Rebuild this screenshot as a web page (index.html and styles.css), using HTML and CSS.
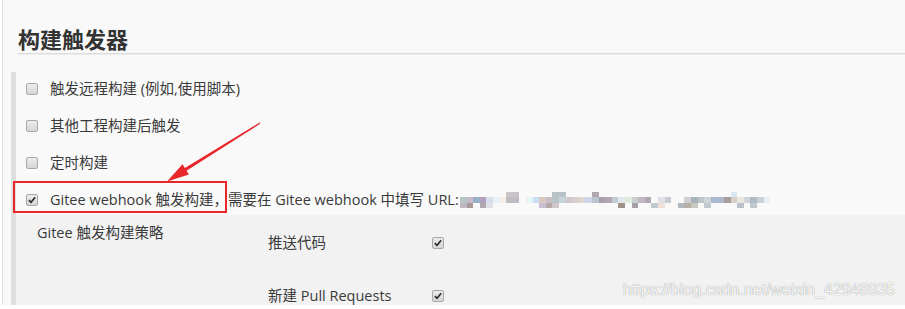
FILE: index.html
```html
<!DOCTYPE html>
<html lang="zh-CN">
<head>
<meta charset="utf-8">
<title>构建触发器</title>
<link rel="stylesheet" href="styles.css">
</head>
<body>
<div class="page">
  <h2 class="title">构建触发器</h2>
  <div class="section">
    <div class="row"><span class="cb"></span><span class="lbl">触发远程构建 (例如,使用脚本)</span></div>
    <div class="row"><span class="cb"></span><span class="lbl">其他工程构建后触发</span></div>
    <div class="row"><span class="cb"></span><span class="lbl">定时构建</span></div>
    <div class="row"><span class="cb checked"><svg viewBox="0 0 12 12" width="10" height="10"><path d="M2.2 6.2 L4.8 8.8 L9.8 2.6" fill="none" stroke="#2b2b2b" stroke-width="2"/></svg></span><span class="lbl">Gitee webhook 触发构建，需要在 Gitee webhook 中填写 URL:<span class="blur"></span></span></div>
    <div class="sub">
      <div class="sub-label">Gitee 触发构建策略</div>
      <div class="opts">
        <div class="opt"><span class="opt-name">推送代码</span><span class="cb checked"><svg viewBox="0 0 12 12" width="10" height="10"><path d="M2.2 6.2 L4.8 8.8 L9.8 2.6" fill="none" stroke="#2b2b2b" stroke-width="2"/></svg></span></div>
        <div class="opt"><span class="opt-name">新建 Pull Requests</span><span class="cb checked"><svg viewBox="0 0 12 12" width="10" height="10"><path d="M2.2 6.2 L4.8 8.8 L9.8 2.6" fill="none" stroke="#2b2b2b" stroke-width="2"/></svg></span></div>
      </div>
    </div>
  </div>
</div>
<div class="annot-box"></div>
<svg class="arrow" width="905" height="309" viewBox="0 0 905 309">
  <polygon points="259.7,122.4 184.9,168.1 182.5,164.3 167,181.5 188.9,174.5 186.5,170.7 260.4,123.6" fill="#e8262c"/>
</svg>
<div class="watermark">https://blog.csdn.net/weixin_42948935</div>
</body>
</html>
```
FILE: styles.css
```css
html, body {
  margin: 0;
  padding: 0;
  background: #ffffff;
}
body {
  position: relative;
  width: 905px;
  height: 309px;
  overflow: hidden;
  font-family: "Open Sans", "Noto Sans CJK SC", sans-serif;
  color: #3a3a3a;
}
.page {
  margin-left: 2px;
  border-left: 1px solid #e2e2e2;
  background: #f9f9f9;
  height: 305px;
  overflow: hidden;
  box-sizing: border-box;
}
.title {
  margin: 0 0 0 15px;
  padding-top: 23px;
  font-family: "Noto Sans CJK SC", sans-serif;
  font-size: 22px;
  font-weight: bold;
  line-height: 30px;
  color: #333333;
  border-bottom: 1px solid #dcdcdc;
  box-shadow: 0 1px 0 #ececec;
}
.section {
  margin-top: 18px;
  margin-left: 8px;
  border-left: 5px solid #dedede;
  padding-top: 5px;
  height: 300px;
}
.row {
  display: flex;
  align-items: center;
  height: 24px;
  padding-left: 10px;
  gap: 12px;
  margin-bottom: 13px;
  font-size: 14.5px;
}
.row:nth-child(4) {
  margin-bottom: 3px;
}
.lbl {
  white-space: nowrap;
  line-height: 20px;
}
.cb {
  display: inline-flex;
  align-items: center;
  justify-content: center;
  box-sizing: border-box;
  width: 12px;
  height: 12px;
  border: 1px solid #a8a8a8;
  border-radius: 2px;
  background: linear-gradient(#ececec, #d6d6d6);
  flex: none;
}
.blur {
  display: inline-block;
  vertical-align: middle;
  width: 312px;
  height: 16px;
  margin-left: 1px;
  margin-top: -3px;
  filter: blur(0.4px);
  background-repeat: no-repeat;
  background-size: 312px 5px, 312px 6px, 312px 5px;
  background-position: 0 0, 0 5px, 0 11px;
  background-image:
    linear-gradient(to right, transparent 0 46.2px, #c8c4c8 46.2px 59.4px, transparent 59.4px 92.4px, #b8c0c8 92.4px 105.6px, transparent 105.6px 132px, #b0a8b0 132px 138.6px, transparent 138.6px 270.6px, #d8e8f0 270.6px 277.2px, transparent 277.2px),
    linear-gradient(to right,
      #b8c4c4 0 6.6px, #c8b8c8 6.6px 13.2px, #98b0c8 13.2px 19.8px, #b0a0c0 19.8px 26.4px,
      #d8e0ec 26.4px 33px, #e8eef4 33px 39.6px, #f4f0e8 39.6px 46.2px, #c0bcc4 46.2px 59.4px,
      transparent 59.4px 66px, #e8f4f8 66px 72.6px, #c8dcf0 72.6px 79.2px, #d8c8c0 79.2px 85.8px,
      #c8c0c4 85.8px 92.4px, #b8c4c8 92.4px 99px, #c8d4d8 99px 105.6px, #d0c8c8 105.6px 112.2px,
      #d8d0d0 112.2px 118.8px, #e0d4d0 118.8px 125.4px, #c8d8e8 125.4px 132px, #b8c4d0 132px 138.6px,
      #a8a0a8 138.6px 145.2px, #b0a8b0 145.2px 151.8px, #c0ccd8 151.8px 158.4px, #e0e8e8 158.4px 165px,
      #e0ece0 165px 171.6px, #c8d0d0 171.6px 178.2px, #c0b8c0 178.2px 184.8px, #b0a8b0 184.8px 191.4px,
      transparent 191.4px 198px, #e0e0e8 198px 204.6px, #c8ccd0 204.6px 211.2px, transparent 211.2px 224.4px,
      #d0d0d0 224.4px 231px, #a8b4bc 231px 237.6px, #c0c4c8 237.6px 244.2px, #d0d4d8 244.2px 250.8px,
      #a8b8d0 250.8px 257.4px, #b0b8c8 257.4px 264px, #a0a098 264px 270.6px, #d8d0c8 270.6px 277.2px,
      #e8e8e0 277.2px 283.8px, #d0d4d8 283.8px 290.4px, #b0bcc4 290.4px 297px, #c8d0d8 297px 303.6px,
      #e8f0f8 303.6px 310.2px, transparent 310.2px),
    linear-gradient(to right,
      #c0b8c0 0 6.6px, #a89898 6.6px 13.2px, transparent 13.2px 19.8px, #b0a8b0 19.8px 26.4px,
      #e0e0e8 26.4px 33px, transparent 33px 79.2px, #c8c0d0 79.2px 85.8px, #b8a8a8 85.8px 92.4px,
      #d0c8c8 92.4px 99px, transparent 99px 158.4px, #a09088 158.4px 165px, transparent 165px 171.6px,
      #a8a0a8 171.6px 178.2px, transparent 178.2px 191.4px, #c0c8d0 191.4px 198px, #f0e0d8 198px 204.6px,
      transparent 204.6px 217.8px, #b0b8c0 217.8px 224.4px, #b8b0a8 224.4px 231px, #c8c8c0 231px 237.6px,
      transparent 237.6px 244.2px, #c0c8d0 244.2px 250.8px, transparent 250.8px 277.2px,
      #b8c0c8 277.2px 283.8px, transparent 283.8px 290.4px, #c0c8d0 290.4px 297px, transparent 297px);
}
.sub {
  display: flex;
  background: #f2f2f2;
  padding-left: 21px;
  padding-top: 8px;
  height: 200px;
  font-size: 14.5px;
}
.sub-label {
  width: 231px;
  line-height: 20px;
  flex: none;
}
.opts {
  padding-top: 10px;
}
.opt {
  display: flex;
  align-items: center;
  height: 20px;
  margin-bottom: 33px;
}
.opt-name {
  width: 164px;
  line-height: 20px;
}
.annot-box {
  position: absolute;
  left: 13px;
  top: 181px;
  width: 210px;
  height: 28px;
  border: 2px solid #e8262c;
}
.arrow {
  position: absolute;
  left: 0;
  top: 0;
}
.watermark {
  position: absolute;
  left: 623px;
  top: 281px;
  font-family: "Liberation Sans", Arial, sans-serif;
  font-size: 16px;
  line-height: 18px;
  color: rgba(255, 255, 255, 0.95);
  text-shadow: 0 0 1px rgba(0, 0, 0, 0.5);
  white-space: nowrap;
}
```
